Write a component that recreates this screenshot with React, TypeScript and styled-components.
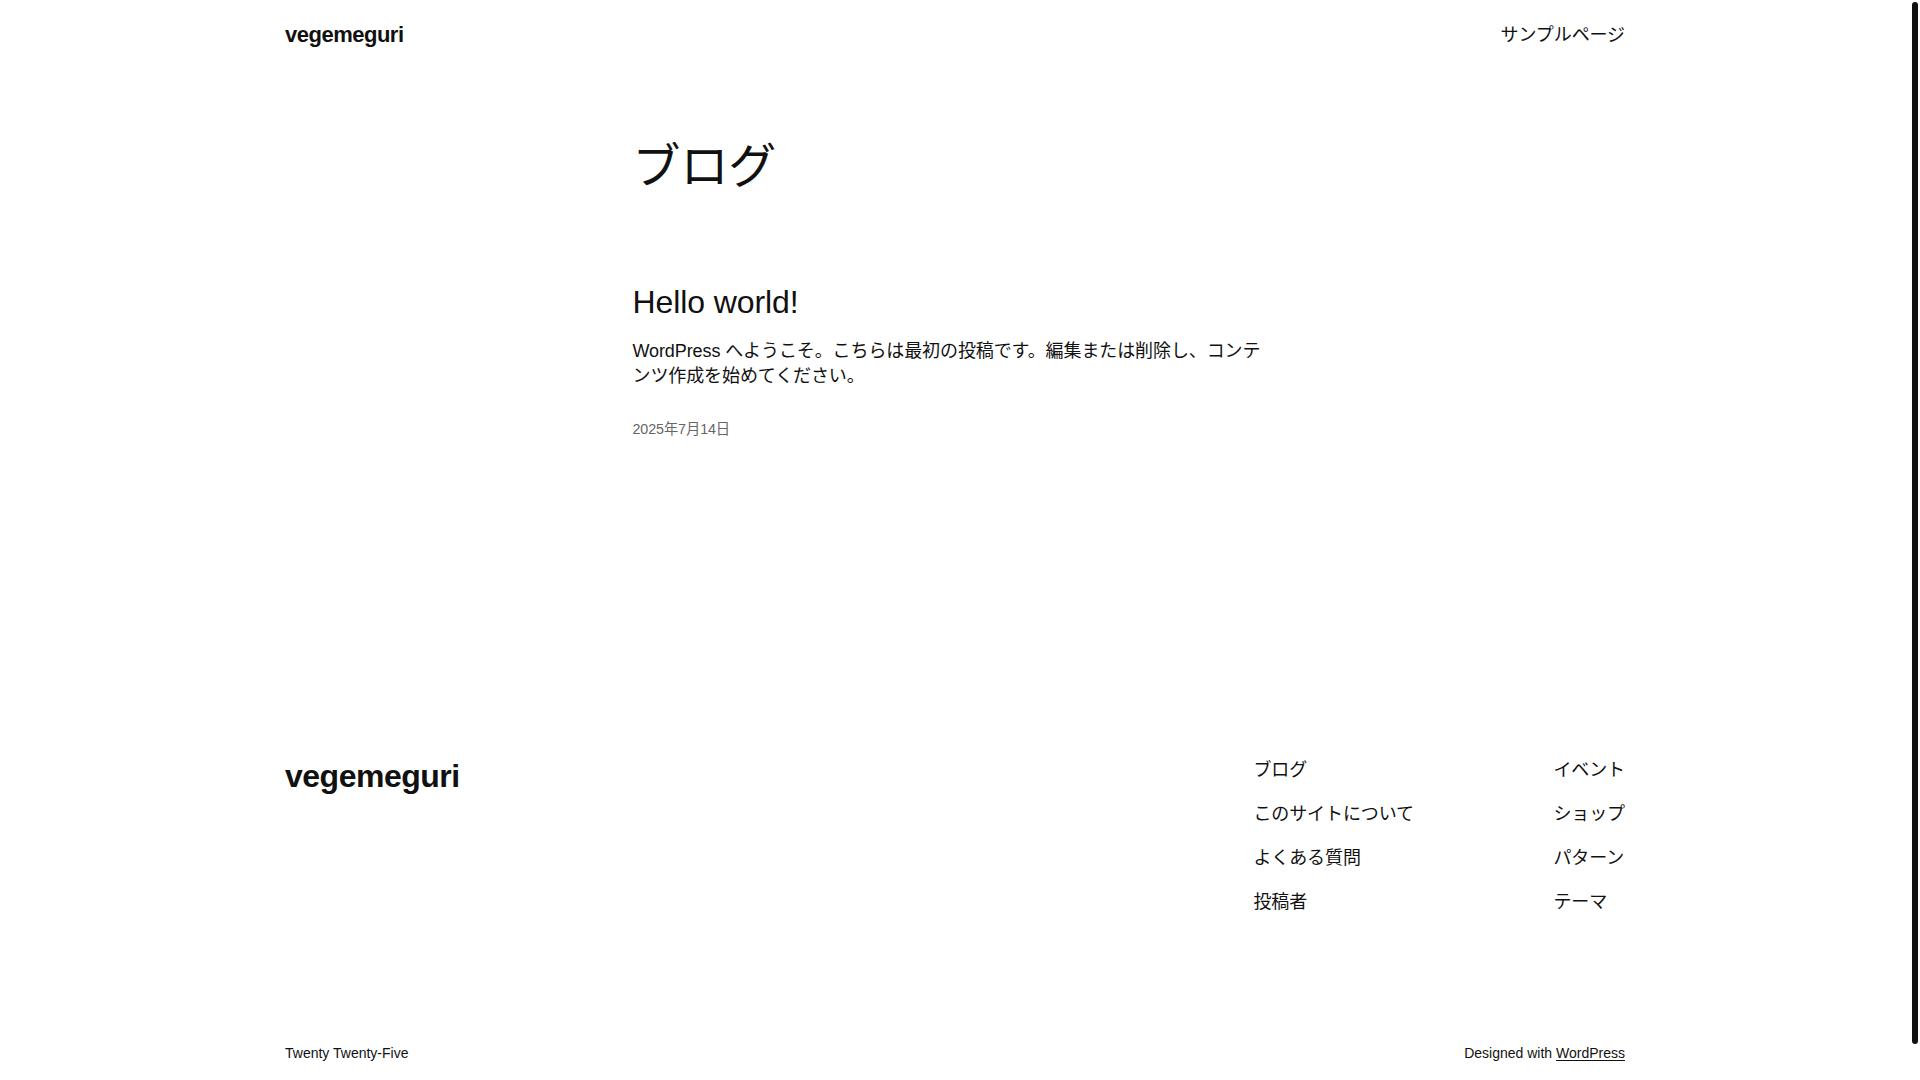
import React, { FC } from 'react';
import styled, { createGlobalStyle } from 'styled-components';

const GlobalStyle = createGlobalStyle`
  html, body {
    margin: 0;
    padding: 0;
    background: #fff;
  }
  body {
    font-family: 'Liberation Sans', 'Noto Sans CJK JP', sans-serif;
    color: #111;
    letter-spacing: -0.1px;
    -webkit-font-smoothing: antialiased;
  }
`;

const Page = styled.div`
  width: 1910px;
  min-height: 1080px;
  display: flex;
  flex-direction: column;
`;

const ScrollThumb = styled.div`
  position: fixed;
  top: 2px;
  left: 1912px;
  width: 6px;
  height: 1042px;
  border-radius: 3px;
  background: #111;
`;

const Wide = styled.div`
  width: 1340px;
  margin: 0 auto;
`;

const Header = styled(Wide)`
  height: 70px;
  display: flex;
  align-items: center;
  justify-content: space-between;
`;

const SiteTitle = styled.a<{ $size: number }>`
  font-size: ${(p) => p.$size}px;
  font-weight: 700;
  letter-spacing: -0.5px;
  line-height: 1.25;
  color: #111;
  text-decoration: none;
`;

const NavLink = styled.a`
  font-size: 18px;
  line-height: 25px;
  color: #111;
  text-decoration: none;
`;

const Main = styled.main`
  width: 645px;
  margin: 0 auto;
  padding-top: 67px;
`;

const PageTitle = styled.h1`
  margin: 0;
  font-size: 48px;
  font-weight: 400;
  line-height: 60px;
`;

const Post = styled.article`
  margin-top: 85px;
`;

const PostTitle = styled.h2`
  margin: 0;
  font-size: 32px;
  font-weight: 400;
  line-height: 40px;
`;

const Excerpt = styled.p`
  margin: 17px 0 0;
  font-size: 18px;
  line-height: 24.5px;
`;

const PostDate = styled.time`
  display: block;
  margin-top: 31px;
  font-size: 14.3px;
  line-height: 21px;
  color: #666;
`;

const Footer = styled.footer`
  margin-top: auto;
`;

const FooterTop = styled(Wide)`
  display: flex;
  justify-content: space-between;
  align-items: flex-start;
`;

const FooterNavs = styled.div`
  display: grid;
  grid-template-columns: 300px auto;
  padding-top: 2.5px;
`;

const NavColumn = styled.nav`
  display: flex;
  flex-direction: column;
  gap: 19px;
`;

const FooterBottom = styled(Wide)`
  display: flex;
  justify-content: space-between;
  align-items: center;
  height: 20px;
  margin-top: 128px;
  padding-bottom: 17px;
  font-size: 14px;
  line-height: 20px;
  letter-spacing: 0;
`;

const Credit = styled.span`
  color: #111;

  a {
    color: #111;
    text-decoration: underline;
    text-underline-offset: 2px;
  }
`;

const leftNav = ['ブログ', 'このサイトについて', 'よくある質問', '投稿者'];
const rightNav = ['イベント', 'ショップ', 'パターン', 'テーマ'];

const App: FC = () => (
  <>
    <GlobalStyle />
    <Page>
      <Header>
        <SiteTitle $size={22} href="#">vegemeguri</SiteTitle>
        <NavLink href="#">サンプルページ</NavLink>
      </Header>

      <Main>
        <PageTitle>ブログ</PageTitle>
        <Post>
          <PostTitle>Hello world!</PostTitle>
          <Excerpt>
            WordPress へようこそ。こちらは最初の投稿です。編集または削除し、コンテンツ作成を始めてください。
          </Excerpt>
          <PostDate>2025年7月14日</PostDate>
        </Post>
      </Main>

      <Footer>
        <FooterTop>
          <SiteTitle $size={32} href="#">vegemeguri</SiteTitle>
          <FooterNavs>
            <NavColumn>
              {leftNav.map((item) => (
                <NavLink key={item} href="#">{item}</NavLink>
              ))}
            </NavColumn>
            <NavColumn>
              {rightNav.map((item) => (
                <NavLink key={item} href="#">{item}</NavLink>
              ))}
            </NavColumn>
          </FooterNavs>
        </FooterTop>
        <FooterBottom>
          <Credit>Twenty Twenty-Five</Credit>
          <Credit>
            Designed with <a href="#">WordPress</a>
          </Credit>
        </FooterBottom>
      </Footer>
    </Page>
    <ScrollThumb />
  </>
);

export default App;
